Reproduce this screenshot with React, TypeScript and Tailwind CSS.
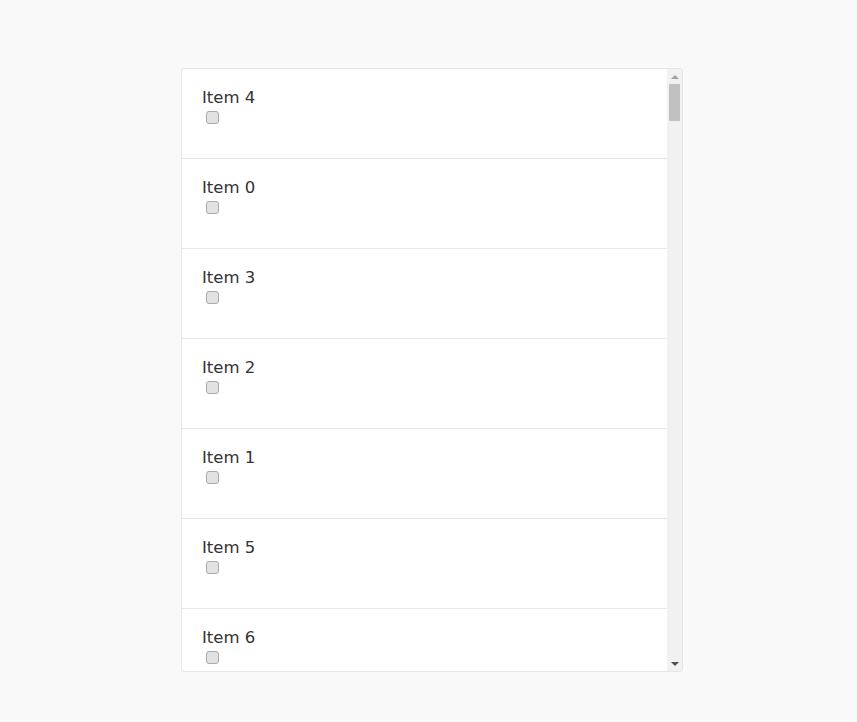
const items = [4, 0, 3, 2, 1, 5, 6];

export default function App() {
  return (
    <div className="min-h-[722px] bg-[#f9f9f9] pt-[68px]" style={{ fontFamily: '"DejaVu Sans", sans-serif' }}>
      <div className="ml-[181px] flex h-[604px] w-[502px] overflow-hidden rounded-[3px] border border-[#e6e6e6] bg-white">
        <div className="flex-1 overflow-hidden">
          {items.map((n) => (
            <div key={n} className="flex h-[90px] flex-col items-start border-b border-[#e8e8e8] px-5 pt-[18px]">
              <span className="text-[16.5px] leading-[21px] text-[#333333]">Item {n}</span>
              <input
                type="checkbox"
                className="mt-[3px] ml-[4px] h-[13px] w-[13px] appearance-none rounded-[3px] border border-[#a9a9a9] bg-[#e2e2e2]"
              />
            </div>
          ))}
        </div>
        <div className="flex w-[15px] flex-col bg-[#f1f1f1]">
          <div className="flex h-[15px] items-center justify-center">
            <div className="h-0 w-0 border-x-[4px] border-b-[4px] border-x-transparent border-b-[#a3a3a3]" />
          </div>
          <div className="mx-[2px] h-[37px] bg-[#c1c1c1]" />
          <div className="flex-1" />
          <div className="flex h-[15px] items-center justify-center">
            <div className="h-0 w-0 border-x-[4px] border-t-[4px] border-x-transparent border-t-[#505050]" />
          </div>
        </div>
      </div>
    </div>
  );
}
